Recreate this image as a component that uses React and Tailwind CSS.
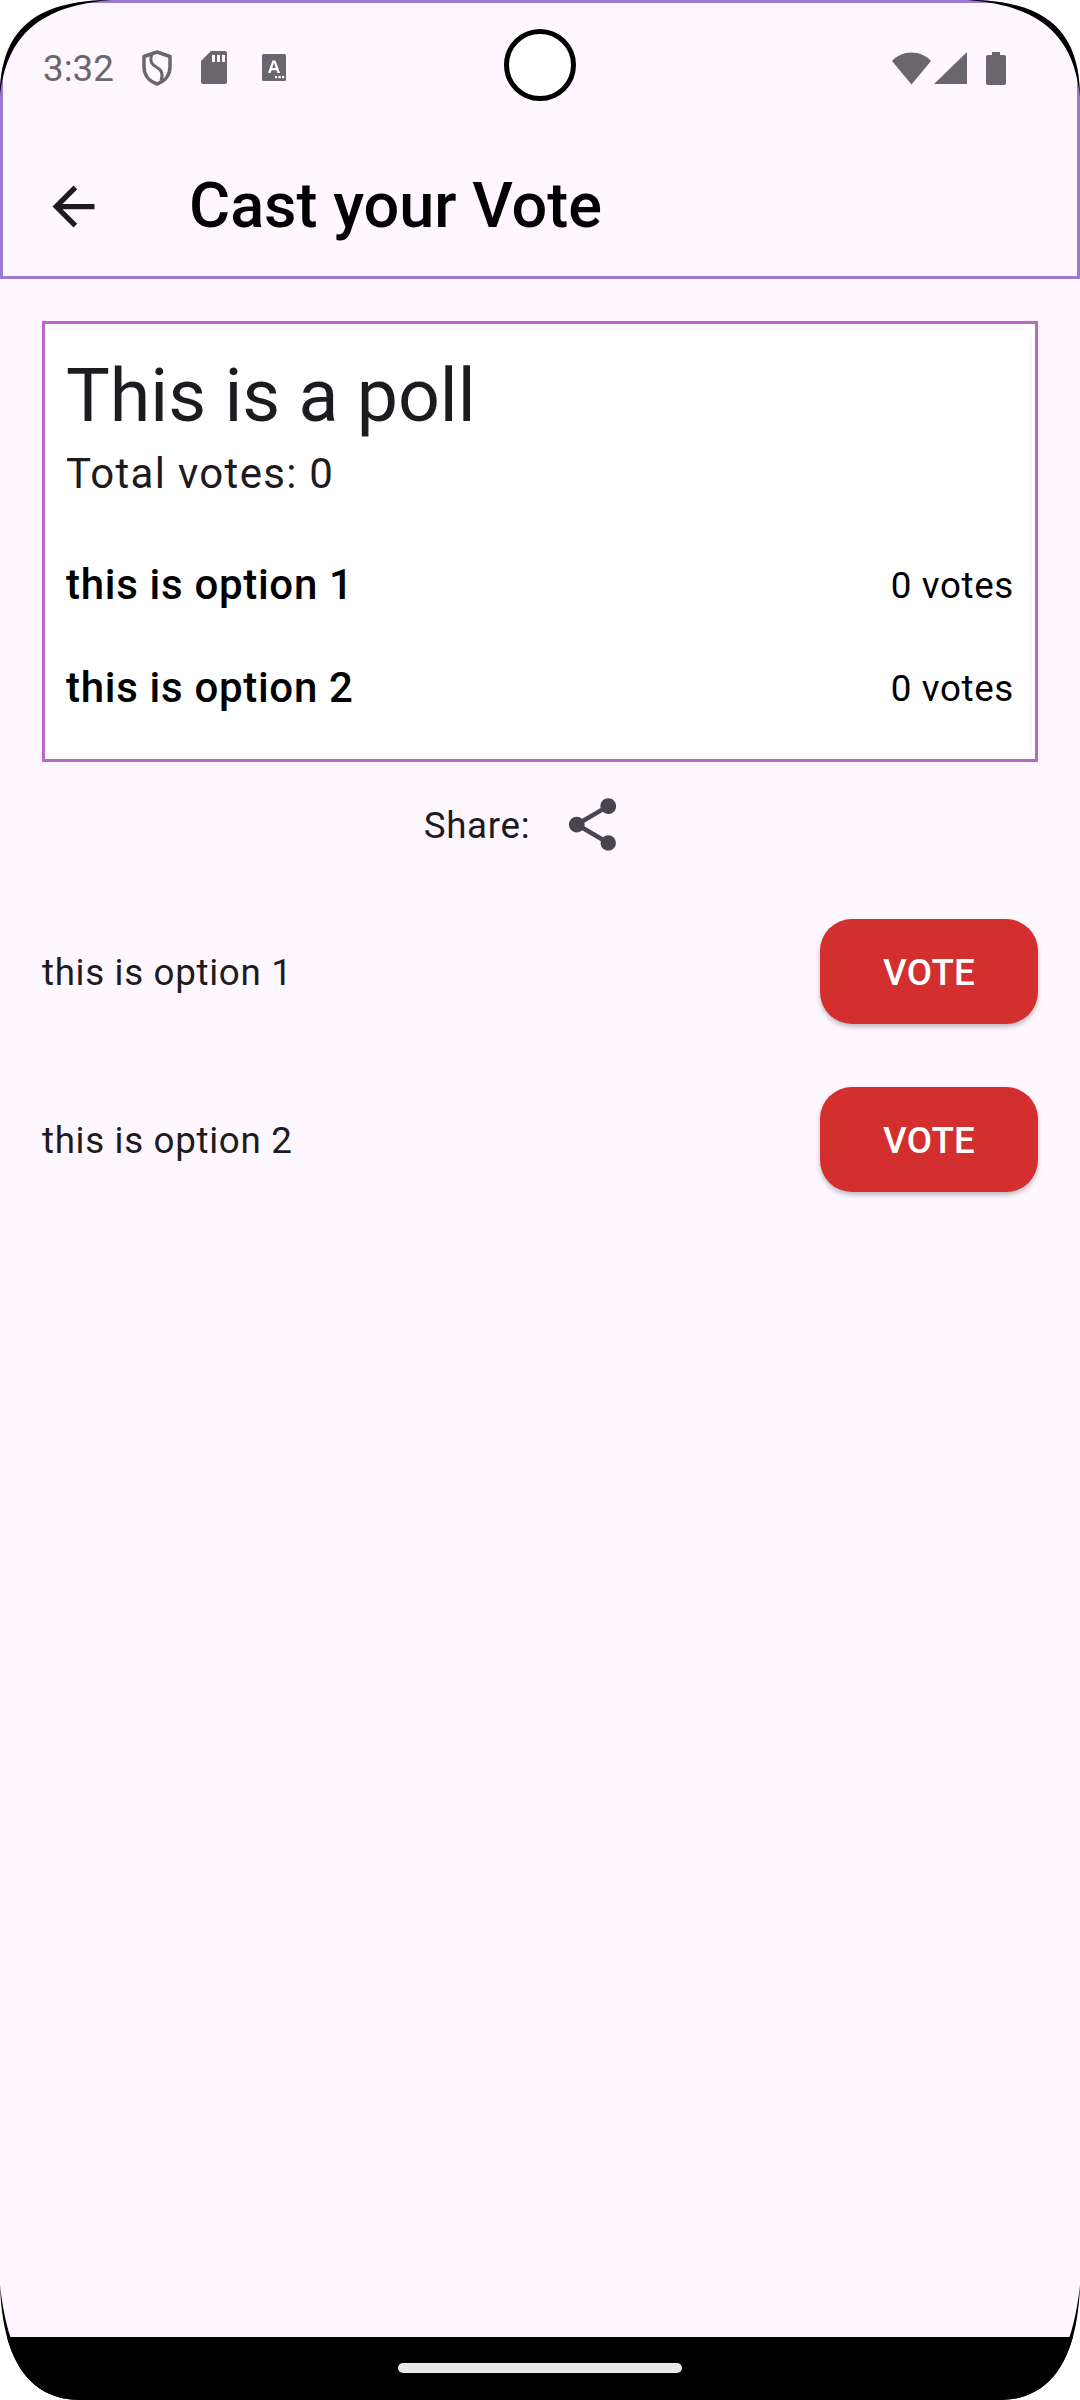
import React from 'react';

const STATUS_GREY = '#69676b';

function StatusIconsLeft() {
  return (
    <div className="flex items-center ml-[28px] mt-[-1px]">
      {/* shield */}
      <svg width="30" height="36" viewBox="0 0 30 36" fill="none" stroke={STATUS_GREY} strokeWidth="3.5">
        <path d="M15 2 L28 6.5 V17 C28 25.5 22.5 31.5 15 34 C7.5 31.5 2 25.5 2 17 V6.5 Z" strokeLinejoin="round" />
        <path d="M10 4 C7 12 10.5 15 15 17.5 C20 20 21.5 24 19 31" strokeWidth="3" />
      </svg>
      {/* sd card */}
      <svg className="ml-[29px]" width="26" height="33" viewBox="0 0 26 33">
        <path d="M10 0 H24 Q26 0 26 2 V31 Q26 33 24 33 H2 Q0 33 0 31 V10 Z" fill={STATUS_GREY} />
        <rect x="11" y="4" width="3" height="7" fill="#fef7ff" />
        <rect x="16" y="4" width="3" height="7" fill="#fef7ff" />
        <rect x="21" y="4" width="3" height="7" fill="#fef7ff" />
      </svg>
      {/* text icon */}
      <svg className="ml-[35px]" width="24" height="27" viewBox="0 0 24 27">
        <rect width="24" height="27" rx="1.5" fill={STATUS_GREY} />
        <path d="M6 19 L10.5 6.5 H13.5 L18 19 H15.4 L14.5 16.2 H9.5 L8.6 19 Z M10.2 14 H13.8 L12 8.8 Z" fill="#ffffff" fillRule="evenodd" />
        <rect x="13" y="22" width="2.2" height="2.2" fill="#ffffff" />
        <rect x="16.5" y="22" width="2.2" height="2.2" fill="#ffffff" />
        <rect x="20" y="22" width="2.2" height="2.2" fill="#ffffff" />
      </svg>
    </div>
  );
}

function StatusIconsRight() {
  return (
    <div className="flex items-center">
      <svg width="39" height="33" viewBox="0 0 39 33">
        <path d="M19.5 32.5 L0 9 C5 3.5 12 0.5 19.5 0.5 C27 0.5 34 3.5 39 9 Z" fill={STATUS_GREY} />
      </svg>
      <svg className="ml-[3px]" width="33" height="32" viewBox="0 0 33 32">
        <path d="M33 0 V32 H0 Z" fill={STATUS_GREY} />
      </svg>
      <svg className="ml-[19px]" width="20" height="33" viewBox="0 0 20 33">
        <path d="M6 0 H14 V3 H18 Q20 3 20 5 V31 Q20 33 18 33 H2 Q0 33 0 31 V5 Q0 3 2 3 H6 Z" fill={STATUS_GREY} />
      </svg>
    </div>
  );
}

function PollRow({ label }) {
  return (
    <div className="flex justify-between items-center h-[63px]">
      <span className="text-[42px] leading-[63px] font-medium text-black tracking-[0.7px]">{label}</span>
      <span className="text-[36.75px] leading-[63px] pt-[1px] text-black tracking-[0.66px]">0 votes</span>
    </div>
  );
}

function VoteRow({ label }) {
  return (
    <div className="flex justify-between items-center">
      <span className="text-[36.75px] pt-[2px] text-[#1d1b20] tracking-[0.66px]">{label}</span>
      <button className="w-[218px] h-[105px] pt-[2px] rounded-[32px] bg-[#d32f2f] text-white text-[36.75px] font-medium tracking-[0.26px] shadow-[0_3px_5px_rgba(0,0,0,0.25)]">
        VOTE
      </button>
    </div>
  );
}

// the phone frame, sits over the page
function DeviceFrame() {
  return (
    <svg className="absolute inset-0 pointer-events-none" width="1080" height="2400" viewBox="0 0 1080 2400">
      <path d="M0 0 H112 C35 0 0 30 0 97 Z" fill="#ffffff" />
      <path d="M1080 0 H968 C1045 0 1080 30 1080 97 Z" fill="#ffffff" />
      {/* rim tapers out at both ends */}
      <path d="M0 97 C0 30 35 0 112 0 C40 5.5 6 35.5 0 97 Z" fill="#000000" />
      <path d="M1080 97 C1080 30 1045 0 968 0 C1040 5.5 1074 35.5 1080 97 Z" fill="#000000" />
      <path d="M0 2285 C2 2345 20 2398 78 2400 H0 Z" fill="#ffffff" />
      <path d="M1080 2285 C1078 2345 1060 2398 1002 2400 H1080 Z" fill="#ffffff" />
      <path d="M0 2285 C2 2345 20 2398 78 2400 C24 2396 6 2340 0 2285 Z" fill="#000000" />
      <path d="M1080 2285 C1078 2345 1060 2398 1002 2400 C1056 2396 1074 2340 1080 2285 Z" fill="#000000" />
    </svg>
  );
}

export default function App() {
  return (
    <div className="relative w-[1080px] h-[2400px] flex flex-col bg-[#fef7ff] overflow-hidden font-['Roboto',sans-serif]">
      <header className="h-[279px] border-[3px] border-[#9c7ad0] flex flex-col">
        <div className="h-[127px] pt-[3px] flex items-center justify-between pl-[40px] pr-[71px]">
          <div className="flex items-center">
            <span className="text-[36.75px] text-[#69676b] pt-[1px]">3:32</span>
            <StatusIconsLeft />
          </div>
          <StatusIconsRight />
        </div>
        <div className="flex-1 flex items-center pt-[6px] pl-[39px]">
          <svg width="63" height="63" viewBox="0 0 24 24" fill="#1d1b20">
            <path d="M20 11H7.83l5.59-5.59L12 4l-8 8 8 8 1.41-1.41L7.83 13H20v-2z" />
          </svg>
          <h1 className="ml-[84px] text-[63px] font-medium text-black">Cast your Vote</h1>
        </div>
      </header>

      <main className="flex-1 px-[42px] pt-[42px]">
        <section className="h-[441px] border-[3px] border-[#ba68c8] bg-white px-[21px] pt-[21px]">
          <h2 className="text-[73.5px] leading-[102px] text-[#1d1b20]">This is a poll</h2>
          <p className="text-[42px] leading-[53px] tracking-[1.3px] text-[#1d1b20]">Total votes: 0</p>
          <div className="mt-[53px] flex flex-col gap-[40px]">
            <PollRow label="this is option 1" />
            <PollRow label="this is option 2" />
          </div>
        </section>

        <div className="mt-[31px] flex justify-center items-center">
          <span className="text-[36.75px] pt-[2px] text-[#1d1b20] tracking-[0.66px] ml-[-32px]">Share:</span>
          <svg className="ml-[31px]" width="63" height="63" viewBox="0 0 24 24" fill="#49454f">
            <path d="M18 16.08c-.76 0-1.44.3-1.96.77L8.91 12.7c.05-.23.09-.46.09-.7s-.04-.47-.09-.7l7.05-4.11c.54.5 1.25.81 2.04.81 1.66 0 3-1.34 3-3s-1.34-3-3-3-3 1.34-3 3c0 .24.04.47.09.7L8.04 9.81C7.5 9.31 6.79 9 6 9c-1.66 0-3 1.34-3 3s1.34 3 3 3c.79 0 1.5-.31 2.04-.81l7.12 4.16c-.05.21-.08.43-.08.65 0 1.61 1.31 2.92 2.92 2.92s2.92-1.31 2.92-2.92-1.31-2.92-2.92-2.92z" />
          </svg>
        </div>

        <div className="mt-[63px] flex flex-col gap-[63px]">
          <VoteRow label="this is option 1" />
          <VoteRow label="this is option 2" />
        </div>
      </main>

      <div className="h-[63px] bg-black flex justify-center pt-[26px]">
        <div className="w-[284px] h-[10px] rounded-full bg-[#e8e8e8]" />
      </div>

      {/* camera hole */}
      <div className="absolute left-[504px] top-[29px] w-[72px] h-[72px] rounded-full bg-white border-[5px] border-black" />
      <DeviceFrame />
    </div>
  );
}
